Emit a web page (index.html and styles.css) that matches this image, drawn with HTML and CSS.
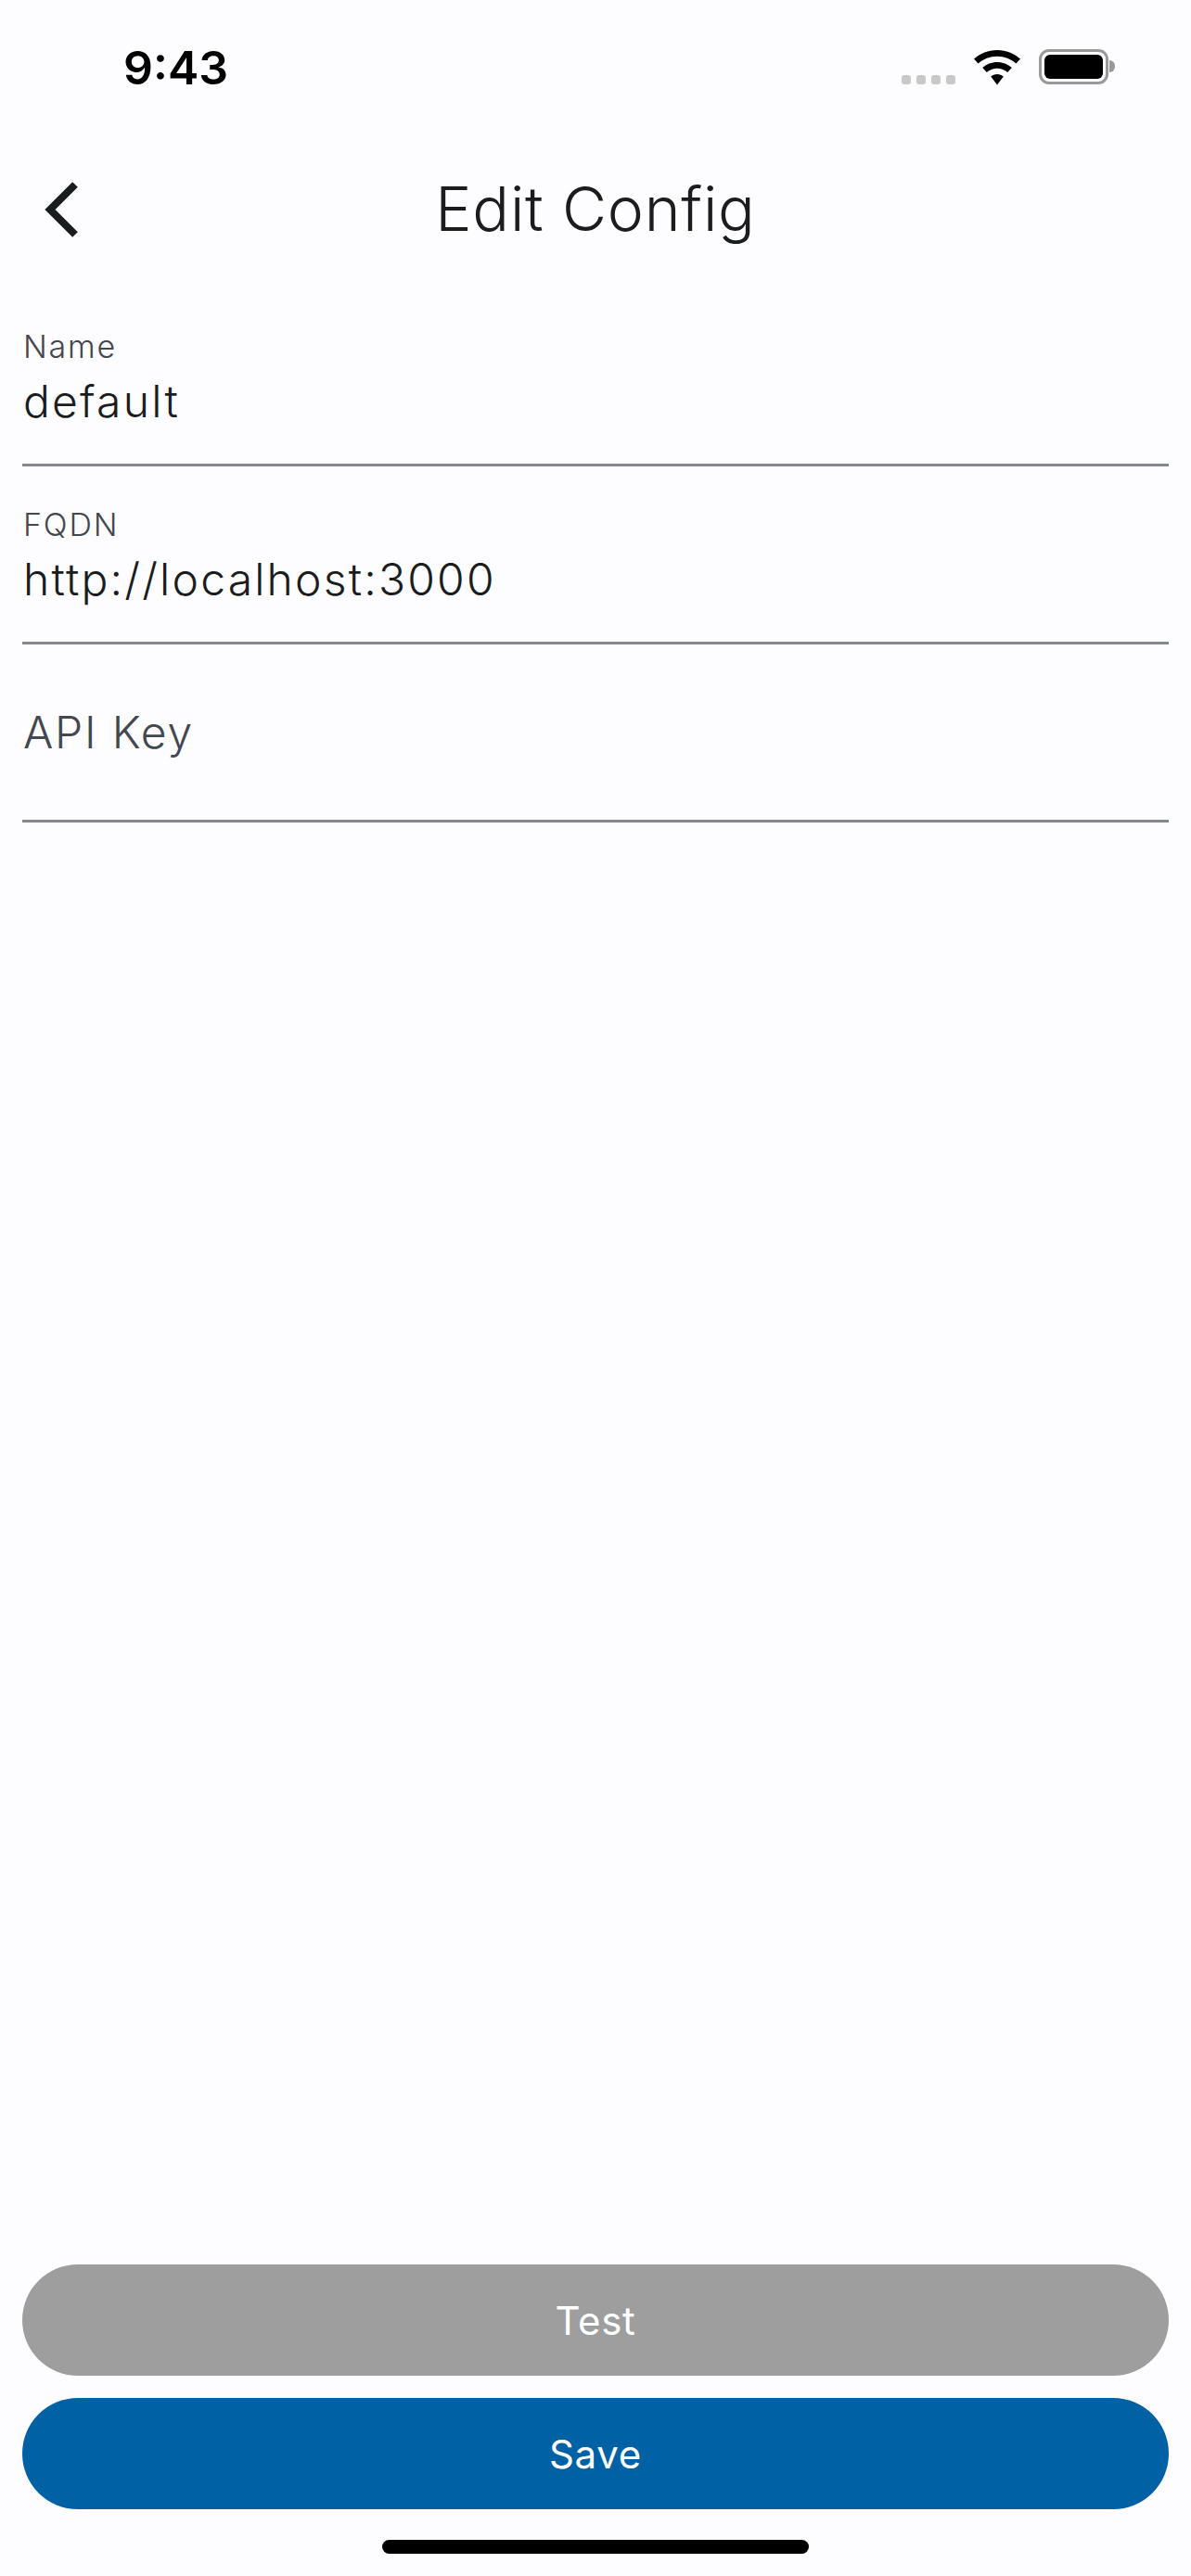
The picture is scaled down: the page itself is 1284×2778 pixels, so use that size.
FILE: index.html
```html
<!DOCTYPE html>
<html lang="en">

    <head>
        <meta charset="UTF-8">
        <meta name="viewport" content="width=device-width, initial-scale=1.0">
        <title>Edit Config</title>
        <link rel="stylesheet" href="styles.css">
    </head>

    <body>
        <div class="screen">
            <div class="status-bar">
                <div class="time">9:43</div>
                <div class="status-icons">
                    <div class="signal">
                        <div class="dot"></div>
                        <div class="dot"></div>
                        <div class="dot"></div>
                        <div class="dot"></div>
                    </div>
                    <svg class="wifi" width="52" height="38" viewBox="0 0 52 38">
                        <path d="M26 0C16.5 0 7.8 3.6 1 9.6L5.6 14.6C11 9.8 18.2 6.8 26 6.8S41 9.8 46.4 14.6L51 9.6C44.2 3.6 35.5 0 26 0Z" />
                        <path d="M26 13C20 13 14.4 15.3 10.2 19L14.8 24C17.8 21.4 21.7 19.8 26 19.8S34.2 21.4 37.2 24L41.8 19C37.6 15.3 32 13 26 13Z" />
                        <path d="M26 26C23.4 26 21 27 19.2 28.6L26 37.4L32.8 28.6C31 27 28.6 26 26 26Z" />
                    </svg>
                    <div class="battery">
                        <div class="battery-level"></div>
                    </div>
                    <div class="battery-cap"></div>
                </div>
            </div>

            <div class="app-bar">
                <svg class="back" width="36" height="60" viewBox="0 0 36 60">
                    <path d="M33 3L6 30L33 57" />
                </svg>
                <div class="title">Edit Config</div>
            </div>

            <div class="form">
                <div class="field">
                    <div class="label">Name</div>
                    <div class="value">default</div>
                </div>
                <div class="field">
                    <div class="label">FQDN</div>
                    <div class="value">http://localhost:3000</div>
                </div>
                <div class="field empty">
                    <div class="placeholder">API Key</div>
                </div>
            </div>

            <div class="actions">
                <div class="button test">Test</div>
                <div class="button save">Save</div>
            </div>

            <div class="home-indicator"></div>
        </div>
    </body>

</html>
```

FILE: styles.css
```css
* {
    margin: 0;
    padding: 0;
    box-sizing: border-box;
}

body {
    background: #fdfcff;
    font-family: Inter, "Liberation Sans", sans-serif;
    color: #1a1c1e;
}

.screen {
    display: flex;
    flex-direction: column;
    width: 1284px;
    height: 2778px;
    overflow: hidden;
}

.status-bar {
    display: flex;
    justify-content: space-between;
    align-items: flex-start;
    height: 164px;
    padding: 53px 82px 0 133px;
}

.time {
    color: #000;
    font-size: 50px;
    font-weight: 600;
    line-height: 40px;
}

.status-icons {
    display: flex;
    align-items: flex-start;
}

.signal {
    display: flex;
    gap: 6px;
    margin-top: 28px;
    margin-right: 19px;
}

.dot {
    width: 10px;
    height: 10px;
    border-radius: 3px;
    background: #c9c9c9;
}

.wifi {
    fill: #000;
    margin-top: 1px;
    margin-right: 19px;
}

.battery {
    width: 75px;
    height: 38px;
    padding: 3px;
    border: 3px solid #999;
    border-radius: 11px;
}

.battery-level {
    width: 100%;
    height: 100%;
    border-radius: 6px;
    background: #000;
}

.battery-cap {
    width: 6px;
    height: 13px;
    margin-top: 12px;
    margin-left: 1px;
    border-radius: 0 7px 7px 0;
    background: #999;
}

.app-bar {
    display: flex;
    justify-content: center;
    align-items: center;
    position: relative;
    height: 122px;
}

.back {
    position: absolute;
    left: 48px;
    top: 32px;
    fill: none;
    stroke: #1a1c1e;
    stroke-width: 8;
}

.title {
    font-size: 66px;
    font-weight: 300;
    letter-spacing: 0.8px;
}

.form {
    display: flex;
    flex-direction: column;
    padding: 0 24px;
    margin-top: 25px;
}

.field {
    height: 192px;
    padding: 0 1px;
    border-bottom: 3px solid #85888f;
}

.label {
    margin-top: 43px;
    color: #43474e;
    font-size: 34px;
    font-weight: 300;
    letter-spacing: 1.8px;
    line-height: 40px;
}

.value {
    margin-top: 10px;
    font-size: 48px;
    font-weight: 350;
    letter-spacing: 2.2px;
    line-height: 58px;
}

.placeholder {
    margin-top: 66px;
    color: #43474e;
    font-size: 48px;
    font-weight: 300;
    letter-spacing: 1.8px;
    line-height: 58px;
}

.actions {
    display: flex;
    flex-direction: column;
    gap: 24px;
    margin-top: auto;
    padding: 0 24px;
}

.button {
    display: flex;
    justify-content: center;
    align-items: center;
    height: 120px;
    border-radius: 60px;
    color: #fff;
    font-size: 42px;
    letter-spacing: 0.75px;
}

.test {
    background: #9e9e9e;
}

.save {
    background: #0061a4;
}

.home-indicator {
    align-self: center;
    width: 460px;
    height: 15px;
    margin-top: 33px;
    margin-bottom: 24px;
    border-radius: 8px;
    background: #000;
}
```
